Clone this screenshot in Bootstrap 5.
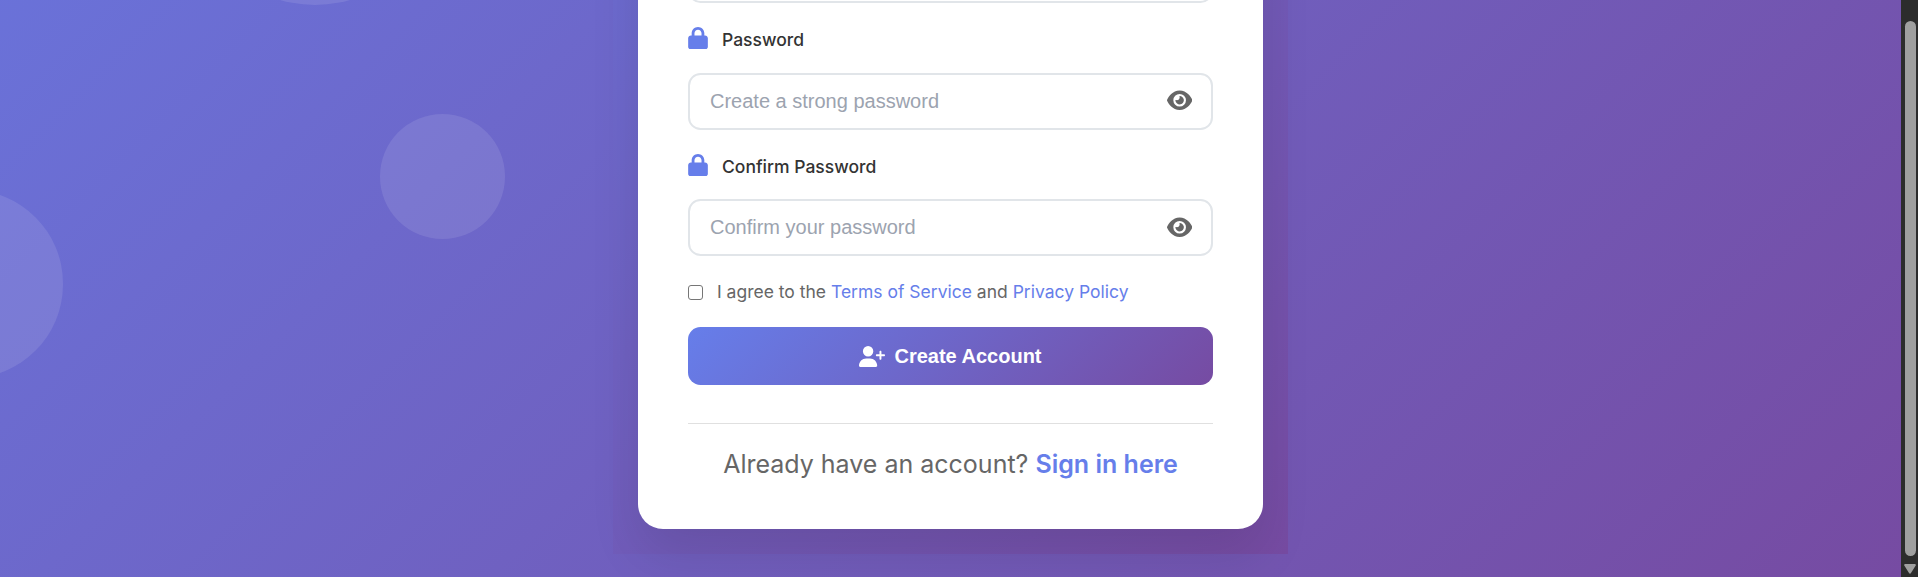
<!DOCTYPE html>
<html lang="en">
<head>
<meta charset="utf-8">
<meta name="viewport" content="width=device-width, initial-scale=1">
<title>Create Account</title>
<link href="https://cdn.jsdelivr.net/npm/bootstrap@5.3.0/dist/css/bootstrap.min.css" rel="stylesheet">
<style>
  body { font-family: Inter, "Liberation Sans", sans-serif; background: #2c2c2c; }
  .screen { height: 577px; }
  .page-bg { background: linear-gradient(135deg, #667eea 0%, #764ba2 100%) bottom / 100% 1377px no-repeat; padding-bottom: 23px; }
  .bubble { background: rgba(255,255,255,.1); }
  .bubble-a { width: 250px; height: 250px; left: 190px; top: -245px; }
  .bubble-b { width: 125px; height: 125px; left: 380px; top: 113.5px; }
  .bubble-c { width: 187.5px; height: 187.5px; left: -124.5px; top: 190px; }
  .signup-wrap { width: 675px; padding: 0 25px 25px; background: linear-gradient(135deg, #667eea 0%, #764ba2 100%) bottom / 100% 1331px no-repeat; }
  .signup-card { border-radius: 25px; padding: 50px; box-shadow: 0 25px 50px rgba(0,0,0,.1); }
  .field-label { font-size: 17.5px; font-weight: 500; line-height: 26px; color: #333; gap: 14px; height: 26px; margin: 24px 0 20px; }
  .field-label.second { margin: 24px 0 19px; }
  .field-label svg { width: 20px; height: 22.5px; fill: #667eea; margin-top: -4px; }
  .field-box { height: 57px; border: 2px solid #e1e5e9; border-radius: 12.5px; padding: 0 19px 0 20px; }
  .field-box input { font: 20px "Liberation Sans", Arial, sans-serif; outline: 0; padding: 0; }
  .field-box input::placeholder { color: #9ca3af; opacity: 1; }
  .field-box svg { width: 25.3px; height: 22.5px; fill: #666; margin-top: -3px; }
  .field-label.second + .field-box svg { margin-top: -1px; }
  .agree { font-size: 17.5px; line-height: 26px; color: #666; height: 26px; margin: 23px 0 22px; gap: 14px; }
  .agree input { appearance: none; width: 15px; height: 15px; border: 1.5px solid #767676; border-radius: 3px; background: #fff; margin: 0; }
  .link-brand { color: #667eea; text-decoration: none; }
  .btn-create { height: 58px; border: 0; border-radius: 12.5px; background: linear-gradient(135deg, #667eea 0%, #764ba2 100%); color: #fff; font: bold 20px "Liberation Sans", Arial, sans-serif; gap: 9px; padding: 0; }
  .btn-create svg { width: 26px; height: 21px; fill: #fff; }
  .signin { margin-top: 38px; border-top: 1px solid #e0e0e0; padding-top: 21px; height: 56px; font-size: 25px; line-height: 38px; color: #666; }
  .signin a { font-weight: 600; }
  .scroll-track { width: 17px; background: #2c2c2c; padding: 21px 3px 0 4px; }
  .scroll-thumb { width: 11px; height: 535px; border-radius: 6px; background: #9f9f9f; }
  .scroll-track svg { width: 12px; height: 10px; fill: #9f9f9f; margin: 8px 0 0 -1px; }
</style>
</head>
<body>
<svg class="d-none">
  <symbol id="lock" viewBox="0 0 448 512"><path d="M144 144v48H304V144c0-44.2-35.8-80-80-80s-80 35.8-80 80zM80 192V144C80 64.5 144.5 0 224 0s144 64.5 144 144v48h16c35.3 0 64 28.7 64 64V448c0 35.3-28.7 64-64 64H64c-35.3 0-64-28.7-64-64V256c0-35.3 28.7-64 64-64H80z"/></symbol>
  <symbol id="eye" viewBox="0 0 576 512"><path d="M288 32c-80.8 0-145.5 36.8-192.6 80.6C48.6 156 17.3 208 2.5 243.7c-3.3 7.9-3.3 16.7 0 24.6C17.3 304 48.6 356 95.4 399.4C142.5 443.2 207.2 480 288 480s145.5-36.8 192.6-80.6c46.8-43.5 78.1-95.4 93-131.1c3.3-7.9 3.3-16.7 0-24.6c-14.9-35.7-46.2-87.7-93-131.1C433.5 68.8 368.8 32 288 32zM144 256a144 144 0 1 1 288 0 144 144 0 1 1 -288 0zm144-64c0 35.3-28.7 64-64 64c-7.1 0-13.9-1.2-20.3-3.3c-5.5-1.8-11.9 1.6-11.7 7.4c.3 6.9 1.3 13.8 3.2 20.7c13.7 51.2 66.4 81.6 117.6 67.9s81.6-66.4 67.9-117.6c-11.1-41.5-47.8-69.4-88.6-71.1c-5.8-.2-9.2 6.1-7.4 11.7c2.1 6.4 3.3 13.2 3.3 20.3z"/></symbol>
</svg>
<div class="screen d-flex overflow-hidden">
  <main class="page-bg position-relative overflow-hidden flex-grow-1 d-flex flex-column align-items-center justify-content-end">
    <div class="bubble bubble-a rounded-circle position-absolute"></div>
    <div class="bubble bubble-b rounded-circle position-absolute"></div>
    <div class="bubble bubble-c rounded-circle position-absolute"></div>
    <div class="signup-wrap position-relative">
      <form class="signup-card bg-white">
        <div class="field-box d-flex align-items-center"></div>

        <label class="field-label d-flex align-items-center" for="pw"><svg><use href="#lock"/></svg>Password</label>
        <div class="field-box d-flex align-items-center">
          <input id="pw" class="border-0 flex-grow-1 bg-transparent" type="password" placeholder="Create a strong password">
          <svg><use href="#eye"/></svg>
        </div>

        <label class="field-label second d-flex align-items-center" for="pw2"><svg><use href="#lock"/></svg>Confirm Password</label>
        <div class="field-box d-flex align-items-center">
          <input id="pw2" class="border-0 flex-grow-1 bg-transparent" type="password" placeholder="Confirm your password">
          <svg><use href="#eye"/></svg>
        </div>

        <div class="agree d-flex align-items-center">
          <input type="checkbox" id="terms">
          <label for="terms">I agree to the <a class="link-brand" href="#">Terms of Service</a> and <a class="link-brand" href="#">Privacy Policy</a></label>
        </div>

        <button type="button" class="btn btn-create w-100 d-flex align-items-center justify-content-center">
          <svg viewBox="0 0 640 512"><path d="M96 128a128 128 0 1 1 256 0A128 128 0 1 1 96 128zM0 482.3C0 383.8 79.8 304 178.3 304h91.4C368.2 304 448 383.8 448 482.3c0 16.4-13.3 29.7-29.7 29.7H29.7C13.3 512 0 498.7 0 482.3zM504 312V248H440c-13.3 0-24-10.7-24-24s10.7-24 24-24h64V136c0-13.3 10.7-24 24-24s24 10.7 24 24v64h64c13.3 0 24 10.7 24 24s-10.7 24-24 24H552v64c0 13.3-10.7 24-24 24s-24-10.7-24-24z"/></svg>
          Create Account
        </button>

        <div class="signin text-center">Already have an account? <a class="link-brand" href="#">Sign in here</a></div>
      </form>
    </div>
  </main>
  <div class="scroll-track flex-shrink-0">
    <div class="scroll-thumb"></div>
    <svg class="d-block" viewBox="0 0 12 10"><path d="M1 0h10q1.400 .5 .7 1.600L7 9q-1 1.300-2 0L.3 1.600Q-.4 .5 1 0z"/></svg>
  </div>
</div>
<script src="https://cdn.jsdelivr.net/npm/bootstrap@5.3.0/dist/js/bootstrap.bundle.min.js"></script>
</body>
</html>
